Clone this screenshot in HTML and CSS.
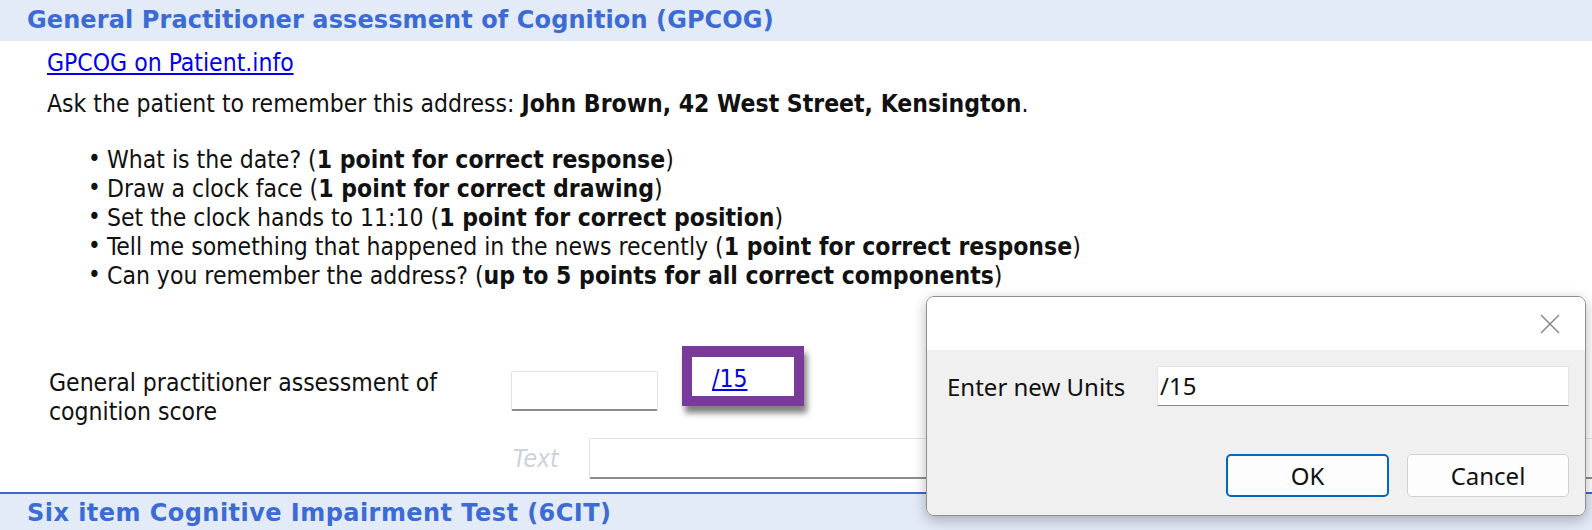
FILE: index.html
```html
<!DOCTYPE html>
<html>
<head>
<meta charset="utf-8">
<link rel="stylesheet" href="styles.css">
</head>
<body>
<div class="page">
  <div class="sec-head">General Practitioner assessment of Cognition (GPCOG)</div>
  <div class="sec-body">
    <div class="line link-line"><a class="ext-link" href="#">GPCOG on Patient.info</a></div>
    <div class="line intro">Ask the patient to remember this address: <b>John Brown, 42 West Street, Kensington</b>.</div>
    <ul class="items">
      <li><span class="dot">•</span><span>What is the date? (<b>1 point for correct response</b>)</span></li>
      <li><span class="dot">•</span><span>Draw a clock face (<b>1 point for correct drawing</b>)</span></li>
      <li><span class="dot">•</span><span>Set the clock hands to 11:10 (<b>1 point for correct position</b>)</span></li>
      <li><span class="dot">•</span><span>Tell me something that happened in the news recently (<b>1 point for correct response</b>)</span></li>
      <li><span class="dot">•</span><span>Can you remember the address? (<b>up to 5 points for all correct components</b>)</span></li>
    </ul>
    <div class="form-row">
      <div class="field-label">General practitioner assessment of<br>cognition score</div>
      <div class="score-input"></div>
      <div class="units-frame"><a class="units-link" href="#">/15</a></div>
    </div>
    <div class="text-row">
      <span class="text-label">Text</span>
      <div class="text-input"></div>
    </div>
  </div>
  <div class="sec-head sec-head-next">Six item Cognitive Impairment Test (6CIT)</div>

  <div class="dialog">
    <div class="dlg-title">
      <svg class="dlg-close" width="20" height="20" viewBox="0 0 20 20"><path d="M1 1 L19 19 M19 1 L1 19" stroke="#8a8a8a" stroke-width="1.5" fill="none"/></svg>
    </div>
    <div class="dlg-body">
      <div class="dlg-row">
        <span class="dlg-label">Enter new Units</span>
        <div class="dlg-input">/15</div>
      </div>
      <div class="dlg-buttons">
        <div class="btn btn-default">OK</div>
        <div class="btn">Cancel</div>
      </div>
    </div>
  </div>
</div>
</body>
</html>
```

FILE: styles.css
```css
* { box-sizing: border-box; }
html, body { margin: 0; padding: 0; background: #fff; }
body {
  width: 1592px;
  height: 530px;
  overflow: hidden;
  font-family: "DejaVu Sans Condensed", "DejaVu Sans", sans-serif;
  font-stretch: condensed;
  font-size: 24.5px;
  color: #111;
}
.page { position: relative; width: 1592px; height: 530px; overflow: hidden; }

.sec-head {
  height: 41px;
  line-height: 41px;
  padding-left: 27px;
  background: #e3ebf8;
  color: #3c6bd5;
  font-family: "DejaVu Sans", sans-serif;
  font-stretch: normal;
  font-weight: bold;
  font-size: 24px;
  letter-spacing: 0.1px;
  white-space: nowrap;
}
.sec-head-next {
  height: 38px;
  line-height: 38px;
  border-top: 2px solid #3b68d3;
  letter-spacing: 0.45px;
}

.sec-body { padding-left: 47px; padding-top: 7px; height: 451px; white-space: nowrap; }
.line { line-height: 29px; height: 29px; }
.intro { margin-top: 12px; }
.ext-link { color: #0000ee; text-decoration: underline; }

.items { list-style: none; margin: 27px 0 0 0; padding: 0 0 0 41px; }
.items li { display: flex; line-height: 29px; height: 29px; }
.items .dot { width: 19px; font-size: 24px; }

.form-row { display: flex; align-items: flex-start; margin-top: 56px; }
.field-label { width: 464px; line-height: 29px; margin-top: 22px; padding-left: 2px; }
.score-input {
  width: 147px; height: 40px; margin-top: 25px;
  border: 1px solid #e2e2e2; border-bottom: 2px solid #8c8c8c; border-radius: 2px;
  background: #fff;
}
.units-frame {
  margin-left: 24px;
  width: 122px; height: 60px;
  border: 10px solid #7a3a9a;
  border-top-width: 11px;
  box-shadow: 3px 7px 6px rgba(0,0,0,0.5);
  padding: 7px 0 0 20px;
  line-height: 29px;
  background: #fff;
}
.units-link { color: #0000ee; text-decoration: underline; }

.text-row { display: flex; align-items: flex-start; margin-top: 12px; }
.text-label {
  margin-left: 466px; width: 76px;
  line-height: 41px; font-style: italic; color: #ccd3dd;
}
.text-input {
  flex: 1; height: 41px;
  border: 1px solid #e2e2e2; border-bottom: 2px solid #8c8c8c; border-right: none;
  border-radius: 2px 0 0 2px;
}

.dialog {
  position: absolute; left: 926px; top: 296px; width: 660px; height: 220px;
  border: 1px solid #8e8e8e; border-radius: 8px; overflow: hidden;
  box-shadow: 0 4px 14px rgba(0,0,0,0.28);
  font-family: "Noto Sans", "Open Sans", sans-serif; font-size: 24px; color: #111;
  display: flex; flex-direction: column;
}
.dlg-title { height: 53px; background: #fff; display: flex; justify-content: flex-end; align-items: flex-start; padding: 17px 25px 0 0; }
.dlg-body { flex: 1; background: #f0f0f0; padding: 16px 16px 0 20px; }
.dlg-row { display: flex; align-items: center; }
.dlg-label { width: 210px; }
.dlg-input {
  flex: 1; height: 40px; background: #fff;
  border: 1px solid #e4e4e4; border-bottom: 1px solid #8a8a8a;
  padding-left: 2px; line-height: 38px;
}
.dlg-buttons { display: flex; justify-content: flex-end; gap: 18px; margin-top: 48px; }
.btn {
  width: 162px; height: 43px; border: 1px solid #d0d0d0; border-radius: 5px;
  background: #fdfdfd; display: flex; align-items: center; justify-content: center;
}
.btn-default { border: 2px solid #0067c0; width: 163px; }
```
